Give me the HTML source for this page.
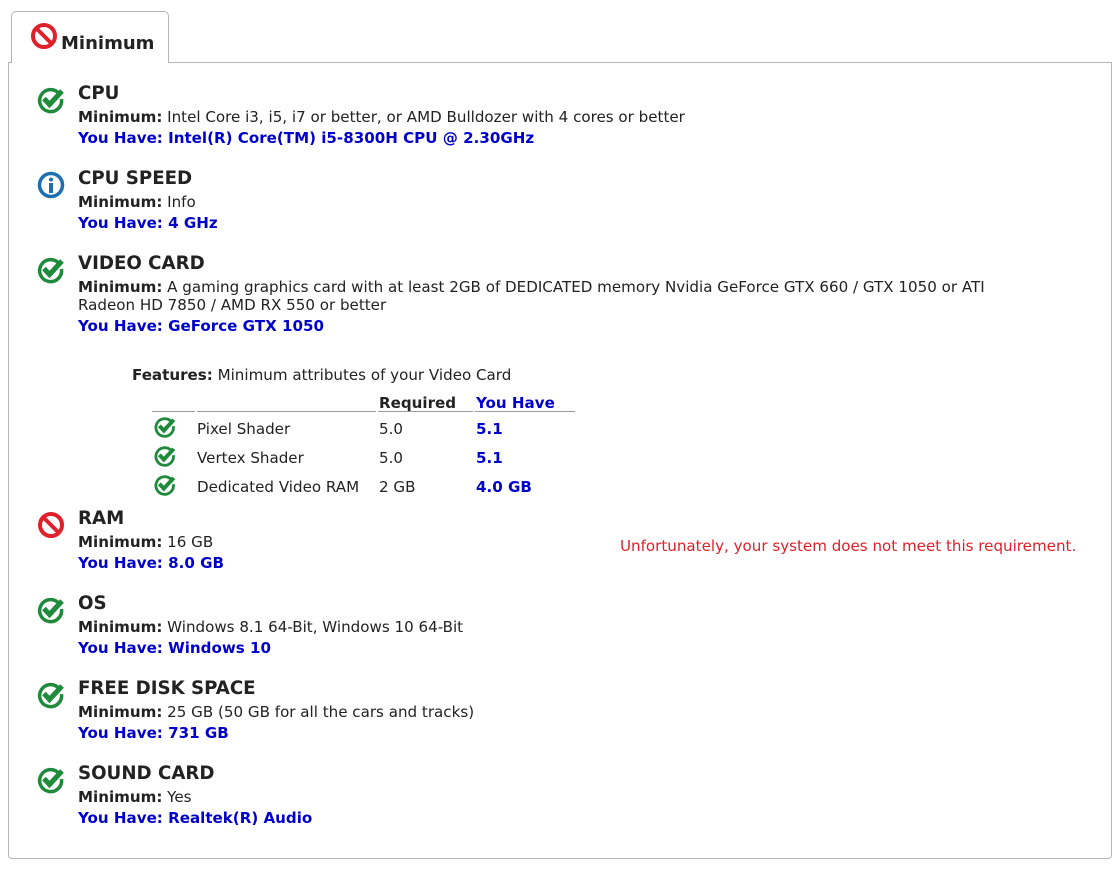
<!DOCTYPE html>
<html><head><meta charset="utf-8"><style>
body{margin:0;width:1120px;height:871px;background:#fff;font-family:"DejaVu Sans",Verdana,sans-serif;color:#222;position:relative;overflow:hidden}
.a{position:absolute;white-space:nowrap}
.h{font-size:18.2px;font-weight:bold;line-height:22px;color:#222}
.t{font-size:15.1px;line-height:20px}
.b{color:#0000cc;font-weight:bold}
.tab{position:absolute;left:11px;top:11px;width:156px;height:51px;border:1px solid #b5b5b5;border-bottom:none;border-radius:5px 5px 0 0;background:#fff;z-index:2}
.panel{position:absolute;left:8px;top:62px;width:1102px;height:795px;border:1px solid #b5b5b5;border-radius:0 0 4px 4px}
.line{position:absolute;height:1px;background:#999}
</style></head><body>
<div class="panel"></div>
<div class="tab">
<svg class="a" style="left:18px;top:11px" width="30" height="28" viewBox="0 0 30 28"><circle cx="14" cy="13" r="11" fill="none" stroke="#e0202a" stroke-width="4"/><line x1="6.5" y1="5.5" x2="21.5" y2="20.5" stroke="#e0202a" stroke-width="4"/></svg>
<div class="a h" style="left:49px;top:21px;font-size:18px">Minimum</div>
</div>

<svg width="0" height="0" style="position:absolute"><defs>
<symbol id="ok" viewBox="0 0 30 30"><path d="M23 8.5 A11 11 0 1 0 25.5 14" fill="none" stroke="#1f8a3c" stroke-width="3.5"/><path d="M8 13.5 L13.5 19.5 L26 6" fill="none" stroke="#1f8a3c" stroke-width="5"/></symbol>
<symbol id="no" viewBox="0 0 30 30"><circle cx="15" cy="15" r="11" fill="none" stroke="#e0202a" stroke-width="4"/><line x1="7.5" y1="7.5" x2="22.5" y2="22.5" stroke="#e0202a" stroke-width="4"/></symbol>
<symbol id="in" viewBox="0 0 30 30"><circle cx="15" cy="15" r="11.5" fill="none" stroke="#1e6fb0" stroke-width="3.5"/><circle cx="15" cy="9.5" r="2" fill="#1e6fb0"/><rect x="13" y="13" width="4" height="10" fill="#1e6fb0"/></symbol>
</defs></svg>

<svg class="a" style="left:36px;top:85px" width="30" height="30"><use href="#ok"/></svg>
<div class="a h" style="left:78px;top:83px">CPU</div>
<div class="a t" style="left:78px;top:107px"><b>Minimum:</b> Intel Core i3, i5, i7 or better, or AMD Bulldozer with 4 cores or better</div>
<div class="a t b" style="left:78px;top:128px">You Have: Intel(R) Core(TM) i5-8300H CPU @ 2.30GHz</div>

<svg class="a" style="left:36px;top:170px" width="30" height="30"><use href="#in"/></svg>
<div class="a h" style="left:78px;top:168px">CPU SPEED</div>
<div class="a t" style="left:78px;top:192px"><b>Minimum:</b> Info</div>
<div class="a t b" style="left:78px;top:213px">You Have: 4 GHz</div>

<svg class="a" style="left:36px;top:255px" width="30" height="30"><use href="#ok"/></svg>
<div class="a h" style="left:78px;top:253px">VIDEO CARD</div>
<div class="a t" style="left:78px;top:277px"><b>Minimum:</b> A gaming graphics card with at least 2GB of DEDICATED memory Nvidia GeForce GTX 660 / GTX 1050 or ATI</div>
<div class="a t" style="left:78px;top:295px">Radeon HD 7850 / AMD RX 550 or better</div>
<div class="a t b" style="left:78px;top:316px">You Have: GeForce GTX 1050</div>

<div class="a t" style="left:132px;top:365px"><b>Features:</b> Minimum attributes of your Video Card</div>
<div class="a t" style="left:379px;top:393px;font-weight:bold">Required</div>
<div class="a t b" style="left:476px;top:393px">You Have</div>
<div class="line" style="left:152px;top:411px;width:43px"></div>
<div class="line" style="left:197px;top:411px;width:179px"></div>
<div class="line" style="left:378px;top:411px;width:95px"></div>
<div class="line" style="left:475px;top:411px;width:100px"></div>
<svg class="a" style="left:153px;top:415px" width="24" height="24"><use href="#ok"/></svg>
<div class="a t" style="left:197px;top:419px">Pixel Shader</div><div class="a t" style="left:379px;top:419px">5.0</div><div class="a t b" style="left:476px;top:419px">5.1</div>
<svg class="a" style="left:153px;top:444px" width="24" height="24"><use href="#ok"/></svg>
<div class="a t" style="left:197px;top:448px">Vertex Shader</div><div class="a t" style="left:379px;top:448px">5.0</div><div class="a t b" style="left:476px;top:448px">5.1</div>
<svg class="a" style="left:153px;top:473px" width="24" height="24"><use href="#ok"/></svg>
<div class="a t" style="left:197px;top:477px">Dedicated Video RAM</div><div class="a t" style="left:379px;top:477px">2 GB</div><div class="a t b" style="left:476px;top:477px">4.0 GB</div>

<svg class="a" style="left:36px;top:510px" width="30" height="30"><use href="#no"/></svg>
<div class="a h" style="left:78px;top:508px">RAM</div>
<div class="a t" style="left:78px;top:532px"><b>Minimum:</b> 16 GB</div>
<div class="a t b" style="left:78px;top:553px">You Have: 8.0 GB</div>
<div class="a t" style="left:620px;top:536px;color:#e0202a">Unfortunately, your system does not meet this requirement.</div>

<svg class="a" style="left:36px;top:595px" width="30" height="30"><use href="#ok"/></svg>
<div class="a h" style="left:78px;top:593px">OS</div>
<div class="a t" style="left:78px;top:617px"><b>Minimum:</b> Windows 8.1 64-Bit, Windows 10 64-Bit</div>
<div class="a t b" style="left:78px;top:638px">You Have: Windows 10</div>

<svg class="a" style="left:36px;top:680px" width="30" height="30"><use href="#ok"/></svg>
<div class="a h" style="left:78px;top:678px">FREE DISK SPACE</div>
<div class="a t" style="left:78px;top:702px"><b>Minimum:</b> 25 GB (50 GB for all the cars and tracks)</div>
<div class="a t b" style="left:78px;top:723px">You Have: 731 GB</div>

<svg class="a" style="left:36px;top:765px" width="30" height="30"><use href="#ok"/></svg>
<div class="a h" style="left:78px;top:763px">SOUND CARD</div>
<div class="a t" style="left:78px;top:787px"><b>Minimum:</b> Yes</div>
<div class="a t b" style="left:78px;top:808px">You Have: Realtek(R) Audio</div>
</body></html>
